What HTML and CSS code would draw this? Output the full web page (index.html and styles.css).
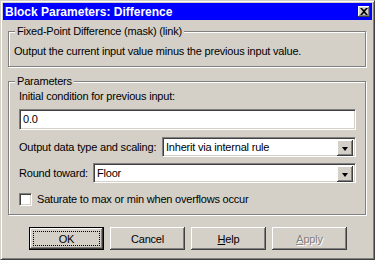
FILE: index.html
```html
<!DOCTYPE html>
<html lang="en">
<head>
    <meta charset="UTF-8">
    <title>Block Parameters: Difference</title>
    <link rel="stylesheet" href="styles.css">
</head>
<body>

    <div class="window">
        <div class="titlebar">
            <span class="title">Block Parameters: Difference</span>
            <span class="close">
                <svg width="8" height="7" viewBox="0 0 8 7"><path d="M0 0h2l2 2 2-2h2L5 3.5 8 7H6L4 5 2 7H0l3-3.5z" fill="#000"/></svg>
            </span>
        </div>

        <div class="group group-mask">
            <span class="caption">Fixed-Point Difference (mask) (link)</span>
            <p class="desc">Output the current input value minus the previous input value.</p>
        </div>

        <div class="group group-params">
            <span class="caption">Parameters</span>
            <div class="label">Initial condition for previous input:</div>
            <div class="edit">0.0</div>

            <div class="row row-type">
                <span>Output data type and scaling:</span>
                <div class="combo combo-type">Inherit via internal rule<span class="drop"><span class="arrow"></span></span></div>
            </div>

            <div class="row row-round">
                <span>Round toward:</span>
                <div class="combo combo-round">Floor<span class="drop"><span class="arrow"></span></span></div>
            </div>

            <div class="check">
                <span class="box"></span>
                <span>Saturate to max or min when overflows occur</span>
            </div>
        </div>

        <div class="buttons">
            <div class="btn btn-default"><span class="focus">OK</span></div>
            <div class="btn">Cancel</div>
            <div class="btn"><u>H</u>elp</div>
            <div class="btn btn-disabled"><u>A</u>pply</div>
        </div>
    </div>

</body>
</html>
```

FILE: styles.css
```css
body {
    margin: 0;
    font-family: "Liberation Sans", Arial, sans-serif;
    font-size: 11px;
    letter-spacing: -0.2px;
    color: #000;
    background: #d4d0c8;
}

.window {
    box-sizing: border-box;
    width: 375px;
    height: 260px;
    padding: 2px;
    background: #d4d0c8;
    border: 1px solid;
    border-color: #d4d0c8 #404040 #404040 #d4d0c8;
    box-shadow: inset 1px 1px #fff, inset -1px -1px #808080;
}

.titlebar {
    height: 17px;
    background: #0000ff;
    display: flex;
    align-items: center;
    justify-content: space-between;
    padding: 0 2px 0 2px;
}

.title {
    color: #fff;
    font-weight: bold;
    font-size: 12px;
    letter-spacing: 0;
}

.close {
    box-sizing: border-box;
    width: 12px;
    height: 11px;
    background: #d4d0c8;
    display: flex;
    align-items: center;
    justify-content: center;
    box-shadow: inset -1px -1px #404040, inset 1px 1px #fff, inset -2px -2px #808080;
}

.close svg {
    display: block;
}

/* etched group boxes */
.group {
    position: relative;
    box-sizing: border-box;
    width: 358px;
    margin-left: 5px;
    border: 1px solid #808080;
    box-shadow: inset 1px 1px #fff, 1px 1px #fff;
}

.caption {
    position: absolute;
    left: 6px;
    top: -7px;
    padding: 0 2px;
    line-height: 13px;
    background: #d4d0c8;
}

.group-mask {
    height: 36px;
    margin-top: 11px;
}

.desc {
    margin: 0;
    padding: 13px 0 0 5px;
    line-height: 13px;
}

.group-params {
    height: 134px;
    margin-top: 14px;
    padding: 8px 0 0 10px;
}

.label {
    line-height: 13px;
}

.edit,
.combo,
.box {
    box-sizing: border-box;
    background: #fff;
    border: 1px solid;
    border-color: #808080 #fff #fff #808080;
    box-shadow: inset 1px 1px #404040, inset -1px -1px #d4d0c8;
}

.edit {
    width: 337px;
    height: 21px;
    margin-top: 6px;
    padding: 3px 0 0 3px;
    line-height: 13px;
}

.row {
    width: 337px;
    height: 20px;
    display: flex;
    align-items: center;
}

.row-type {
    margin-top: 7px;
}

.row-round {
    margin-top: 6px;
}

.combo {
    position: relative;
    height: 20px;
    margin-left: auto;
    padding: 3px 0 0 3px;
    line-height: 13px;
}

.combo-type {
    width: 194px;
}

.combo-round {
    width: 263px;
}

.drop {
    position: absolute;
    right: 2px;
    top: 2px;
    box-sizing: border-box;
    width: 16px;
    height: 16px;
    background: #d4d0c8;
    display: flex;
    align-items: center;
    justify-content: center;
    box-shadow: inset -1px -1px #404040, inset 1px 1px #fff, inset -2px -2px #808080;
}

.arrow {
    width: 0;
    height: 0;
    margin-top: 1px;
    border-left: 3.5px solid transparent;
    border-right: 3.5px solid transparent;
    border-top: 4px solid #000;
}

.check {
    display: flex;
    align-items: center;
    gap: 5px;
    margin-top: 10px;
    line-height: 13px;
}

.box {
    width: 13px;
    height: 13px;
}

.buttons {
    display: flex;
    gap: 6px;
    margin-top: 12px;
    padding-left: 26px;
}

.btn {
    box-sizing: border-box;
    width: 75px;
    height: 23px;
    display: flex;
    align-items: center;
    justify-content: center;
    background: #d4d0c8;
    box-shadow: inset -1px -1px #404040, inset 1px 1px #fff, inset -2px -2px #808080;
}

.btn-default {
    border: 1px solid #000;
    padding: 3px;
}

.focus {
    box-sizing: border-box;
    width: 100%;
    height: 100%;
    display: flex;
    align-items: center;
    justify-content: center;
    border: 1px dotted #000;
}

.btn-disabled {
    color: #808080;
    text-shadow: 1px 1px #fff;
}
```
